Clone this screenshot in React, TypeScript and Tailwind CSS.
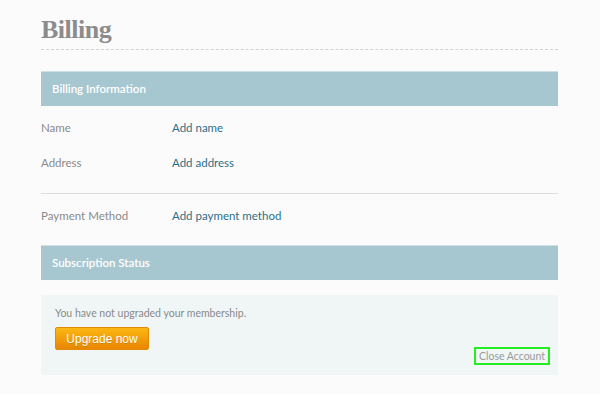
const infoRows = [
  { label: 'Name', action: 'Add name' },
  { label: 'Address', action: 'Add address' },
]

function SectionBar({ title }: { title: string }) {
  return (
    <div className="h-[35px] flex items-center pl-[11px] bg-[#a7c7d0] border-t border-[#cfe1e6] text-[11.5px] font-semibold text-white">
      {title}
    </div>
  )
}

export default function App() {
  return (
    <div className="min-h-[394px] w-[600px] bg-[#fcfbfc] font-['Lato','Noto_Sans',sans-serif]">
      <div className="ml-[41px] w-[517px] pt-[15px]">
        <h1 className="pb-[5px] border-b border-dashed border-[#d2d2d2] font-['Liberation_Serif',serif] text-[26px] leading-[29px] font-bold tracking-[-0.5px] text-[#8c8c8c]">
          Billing
        </h1>

        <div className="mt-[21px]">
          <SectionBar title="Billing Information" />
        </div>

        <div className="mt-[4px]">
          {infoRows.map((row) => (
            <div key={row.label} className="flex items-center h-[35px] text-[11.5px]">
              <span className="w-[131px] text-[#8a8a8a]">{row.label}</span>
              <a className="text-[#2b6f86]">{row.action}</a>
            </div>
          ))}
        </div>

        <div className="mt-[13px] border-t border-[#dddddd]" />

        <div className="flex items-center h-[44px] text-[11.5px]">
          <span className="w-[131px] text-[#8a8a8a]">Payment Method</span>
          <a className="text-[#2b6f86]">Add payment method</a>
        </div>

        <div className="mt-[7px]">
          <SectionBar title="Subscription Status" />
        </div>

        <div className="mt-[15px] h-[80px] bg-[#f0f6f6] pl-[14px] pr-[8px] pt-[10px] pb-[10px] flex justify-between">
          <div className="flex flex-col">
            <p className="text-[10.5px] leading-[16px] text-[#8a8a8a]">You have not upgraded your membership.</p>
            <button className="mt-[6px] w-[94px] h-[23px] rounded-[2px] border border-[#e08a06] bg-gradient-to-b from-[#fbb713] to-[#e98600] font-['Liberation_Sans',sans-serif] text-[12px] text-white [text-shadow:0_1px_0_rgba(0,0,0,0.15)]">
              Upgrade now
            </button>
          </div>
          <span className="self-end px-[3px] h-[18px] leading-[14px] border-2 border-[#22ee22] text-[10.5px] text-[#9a9a9a]">
            Close Account
          </span>
        </div>
      </div>
    </div>
  )
}
